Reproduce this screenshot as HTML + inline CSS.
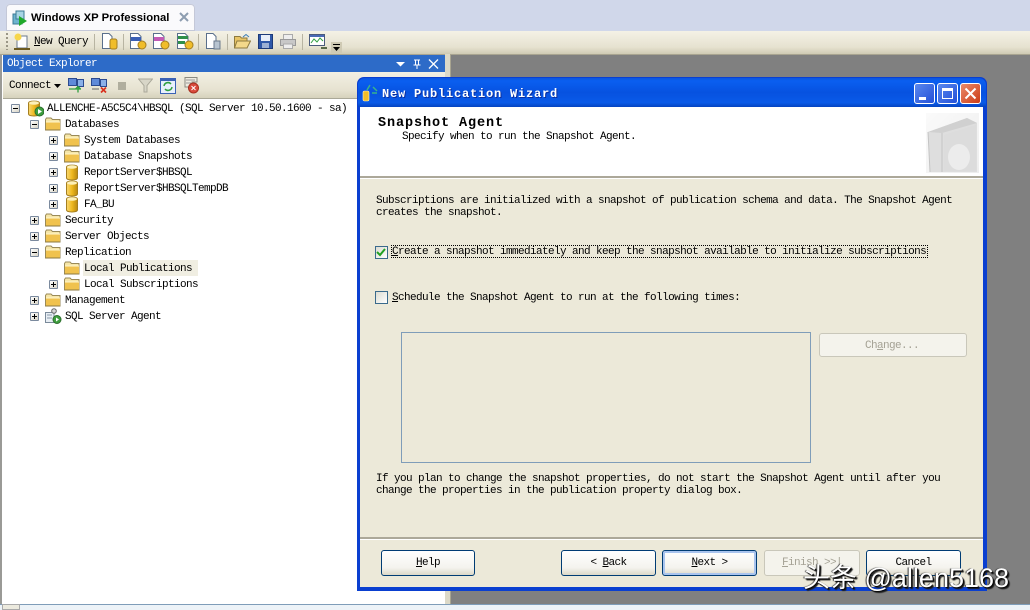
<!DOCTYPE html>
<html><head><meta charset="utf-8">
<style>
html,body{margin:0;padding:0}
body{width:1030px;height:610px;overflow:hidden;position:relative;background:#808080;font-family:"Liberation Mono",monospace;font-size:11px;letter-spacing:-.6px;color:#000}
div,svg,span.a{position:absolute}
.t{white-space:pre;line-height:12px;height:12px;margin-top:1px}
.b{font-weight:bold}
.exp{width:7px;height:7px;border:1px solid #7b8a9e;background:linear-gradient(135deg,#fff,#d8d4c6);box-sizing:content-box;border-radius:1px;margin-top:1px}
.exp:before{content:"";position:absolute;left:1px;top:3px;width:5px;height:1px;background:#000}
.exp.p:after{content:"";position:absolute;left:3px;top:1px;width:1px;height:5px;background:#000}
.btn{height:24px;border:1px solid #003c74;border-radius:3px;background:linear-gradient(#fff,#f4f3ee 70%,#dcd8c8);text-align:center;line-height:25px;box-sizing:content-box}
u{text-decoration:underline}
</style></head><body>
<svg width="0" height="0" style="position:absolute">
<defs>
<symbol id="fo" viewBox="0 0 16 14"><path d="M.5 2.5 L1.5 1 H6 L7.5 2.5 H15 V13 H.5Z" fill="#f6e6a8" stroke="#9a8a58"/><path d="M1 5.5 H15 V13 H1Z" fill="#f0c24e"/><path d="M1 5 H15" stroke="#fff6cc"/><path d="M.5 13 H15.5" stroke="#8d7a40"/></symbol>
<symbol id="db" viewBox="0 0 12 17"><defs><linearGradient id="g" x1="0" x2="1" y1="0" y2="0"><stop offset="0" stop-color="#f9d873"/><stop offset=".5" stop-color="#efb91f"/><stop offset="1" stop-color="#b98810"/></linearGradient></defs><path d="M.5 3 C.5 .5 11.5 .5 11.5 3 V14 C11.5 16.6 .5 16.6 .5 14Z" fill="url(#g)" stroke="#a57f20"/><ellipse cx="6" cy="3" rx="5" ry="1.8" fill="#fdf0b8"/></symbol>
</defs>
</svg>

<!-- top -->
<div style="left:0;top:0;width:1030px;height:31px;background:#d0d7ea"></div>
<div style="left:6px;top:4px;width:189px;height:27px;background:#fafafc;border-radius:4px 4px 0 0;box-shadow:inset 0 0 0 1px #c4c8d8"></div>
<svg style="left:12px;top:10px" width="16" height="16" viewBox="0 0 16 16"><rect x="1" y="4" width="9" height="10" fill="#6db4cf" stroke="#3c7a94"/><rect x="4" y="1" width="8" height="8" fill="#a8d4e4" stroke="#3c7a94"/><path d="M7 6 L15 11 L7 16Z" fill="#1fa82b"/></svg>
<div class="t" style="left:31px;top:11px;font-family:'Liberation Sans',sans-serif;font-size:11.3px;font-weight:bold;letter-spacing:0;line-height:13px;height:13px">Windows XP Professional</div>
<svg style="left:179px;top:12px" width="10" height="10" viewBox="0 0 10 10"><path d="M1 1 L9 9 M9 1 L1 9" stroke="#8d9db0" stroke-width="2"/></svg>

<!-- toolbar -->
<div style="left:0;top:31px;width:1030px;height:23px;background:linear-gradient(#f4f2e6,#e6e2d0 70%,#cfcab4)"></div>
<div style="left:0;top:54px;width:1030px;height:1px;background:#a8a490"></div>
<div style="left:6px;top:33px;width:2px;height:17px;background:repeating-linear-gradient(#9a9686 0 2px,transparent 2px 4px)"></div>
<svg style="left:13px;top:33px" width="19" height="18" viewBox="0 0 19 18"><rect x="4" y="3" width="10" height="12" fill="#fff" stroke="#6b7a8c"/><circle cx="5" cy="4" r="3.5" fill="#f7d64a"/><path d="M1 16 H17" stroke="#6b5a20" stroke-width="2"/></svg>
<div class="t" style="left:34px;top:35px"><u>N</u>ew Query</div>
<div style="left:94px;top:34px;width:1px;height:16px;background:#b8b4a2"></div>
<svg style="left:101px;top:33px" width="18" height="17" viewBox="0 0 18 17"><path d="M1.500 .5 H8 L11 3.500 V15.500 H1.500Z" fill="#fff" stroke="#5a6f8c"/><rect x="9" y="6" width="7" height="10" rx="2" fill="#f0bd2a" stroke="#a57f20"/></svg>
<div style="left:123px;top:34px;width:1px;height:16px;background:#b8b4a2"></div>
<svg style="left:129px;top:33px" width="18" height="17" viewBox="0 0 18 17"><path d="M1.500 .5 H9 L12 3.500 V15.500 H1.500Z" fill="#fff" stroke="#5a6f8c"/><rect x="2" y="4" width="10" height="4" fill="#3a5fb5"/><circle cx="13" cy="12" r="4" fill="#f0bd2a" stroke="#a57f20"/></svg>
<svg style="left:152px;top:33px" width="18" height="17" viewBox="0 0 18 17"><path d="M1.500 .5 H9 L12 3.500 V15.500 H1.500Z" fill="#fff" stroke="#5a6f8c"/><rect x="2" y="4" width="10" height="4" fill="#c35ab5"/><circle cx="13" cy="12" r="4" fill="#f0bd2a" stroke="#a57f20"/></svg>
<svg style="left:176px;top:33px" width="18" height="17" viewBox="0 0 18 17"><path d="M1.500 .5 H9 L12 3.500 V15.500 H1.500Z" fill="#fff" stroke="#5a6f8c"/><rect x="2" y="3" width="10" height="3" fill="#2f8f4a"/><rect x="2" y="8" width="7" height="3" fill="#2f8f4a"/><circle cx="13" cy="12" r="4" fill="#f0bd2a" stroke="#a57f20"/></svg>
<div style="left:198px;top:34px;width:1px;height:16px;background:#b8b4a2"></div>
<svg style="left:205px;top:33px" width="16" height="17" viewBox="0 0 16 17"><path d="M1.500 .5 H8 L11 3.500 V15.500 H1.500Z" fill="#fff" stroke="#5a6f8c"/><rect x="9" y="8" width="6" height="8" fill="#b8c4d0" stroke="#6b7a8c"/></svg>
<div style="left:227px;top:34px;width:1px;height:16px;background:#b8b4a2"></div>
<svg style="left:234px;top:34px" width="17" height="15" viewBox="0 0 17 15"><path d="M.5 2.500 H6 L7.500 4 H13 V14 H.5Z" fill="#e8c465" stroke="#8d7a40"/><path d="M3 7 H16.500 L13 14 H.5Z" fill="#f3d88a" stroke="#8d7a40"/><path d="M9 3 L12 .5 L15 3" stroke="#3f7fb5" fill="none"/></svg>
<svg style="left:258px;top:34px" width="15" height="15" viewBox="0 0 15 15"><rect x=".5" y=".5" width="14" height="14" fill="#2f58a8" stroke="#1d3a78"/><rect x="3" y="1" width="9" height="6" fill="#e8eef8"/><rect x="4" y="9" width="7" height="5" fill="#9cb0d4"/></svg>
<svg style="left:280px;top:34px" width="16" height="15" viewBox="0 0 16 15"><rect x="3.500" y=".5" width="9" height="5" fill="#eee" stroke="#aaa"/><rect x=".5" y="5.500" width="15" height="6" fill="#c8c8c8" stroke="#999"/><rect x="3.500" y="10" width="9" height="4.500" fill="#eee" stroke="#aaa"/></svg>
<div style="left:302px;top:34px;width:1px;height:16px;background:#b8b4a2"></div>
<svg style="left:309px;top:33px" width="19" height="17" viewBox="0 0 19 17"><rect x=".5" y="1.500" width="15" height="11" fill="#fff" stroke="#4a5a7c"/><rect x="1" y="2" width="14" height="2" fill="#4a6ab5"/><path d="M2 10 L5 6 L8 9 L11 5 L14 8" stroke="#2f9f3f" fill="none"/><path d="M12 15 H18" stroke="#5a6a4a" stroke-width="2"/></svg>
<div style="left:331px;top:42px;width:11px;height:11px;background:#cfcab4"></div>
<svg style="left:333px;top:44px" width="7" height="8" viewBox="0 0 7 8"><path d="M0 0 H7 V1 H0Z M0 3 H7 L3.500 7Z" fill="#000"/></svg>

<!-- left pane -->
<div style="left:0;top:55px;width:445px;height:549px;background:#fff"></div>
<div style="left:0;top:55px;width:2px;height:549px;background:#9a9a96"></div>
<div style="left:3px;top:55px;width:442px;height:17px;background:#2d6bc8"></div>
<div class="t" style="left:7px;top:57px;color:#fff">Object Explorer</div>
<svg style="left:396px;top:59px" width="50" height="10" viewBox="0 0 50 10"><path d="M0 3 H9 L4.500 7.500Z" fill="#fff"/><path d="M18 1 H24 M19.500 1 V6 H22.500 V1 M17.500 6 H24.500 M21 6 V10" stroke="#fff" fill="none"/><path d="M33 0.500 L42 9.500 M42 .5 L33 9.500" stroke="#fff" stroke-width="1.300"/></svg>
<div style="left:3px;top:72px;width:442px;height:26px;background:linear-gradient(#f2f0e4,#e6e2d0 70%,#d6d2bc)"></div>
<div class="t" style="left:9px;top:79px">Connect</div>
<svg style="left:54px;top:84px" width="7" height="4"><path d="M0 0 H7 L3.500 4Z" fill="#000"/></svg>
<svg style="left:68px;top:78px" width="17" height="15" viewBox="0 0 17 15"><rect x=".5" y=".5" width="8" height="7" fill="#5f8ad8" stroke="#2b4a90"/><rect x="9.500" y="1.500" width="6" height="7" fill="#8ab0e8" stroke="#2b4a90"/><path d="M1 11 H13 M10 14.500 V9 M7.500 11 L10 8.500 L12.500 11" stroke="#2f9f3f" fill="none" stroke-width="1.300"/></svg>
<svg style="left:91px;top:78px" width="17" height="15" viewBox="0 0 17 15"><rect x=".5" y=".5" width="8" height="7" fill="#5f8ad8" stroke="#2b4a90"/><rect x="9.500" y="1.500" width="6" height="7" fill="#8ab0e8" stroke="#2b4a90"/><path d="M1 11 H8" stroke="#666"/><path d="M10 9.500 L15 14.500 M15 9.500 L10 14.500" stroke="#d8301c" stroke-width="1.700"/></svg>
<div style="left:118px;top:82px;width:8px;height:8px;background:#b0ae9e"></div>
<svg style="left:138px;top:78px" width="15" height="15" viewBox="0 0 15 15"><path d="M.5 1 H14.500 L9 7.500 V14 H6 V7.500Z" fill="#d8d6c8" stroke="#aaa89a"/></svg>
<svg style="left:160px;top:78px" width="16" height="16" viewBox="0 0 16 16"><rect x=".5" y=".5" width="15" height="15" fill="#e8f0fc" stroke="#3a62b5"/><rect x="1" y="1" width="14" height="2" fill="#3a62b5"/><path d="M4 8 A4 4 0 0 1 11 6 M12 9 A4 4 0 0 1 5 11" stroke="#2f9f3f" fill="none" stroke-width="1.500"/></svg>
<svg style="left:183px;top:77px" width="17" height="17" viewBox="0 0 17 17"><path d="M2 .5 H14 V5 H9 V10 H2Z" fill="#efece0" stroke="#8a8a80"/><path d="M3 3 H12 M3 6 H8" stroke="#999"/><circle cx="10.500" cy="11" r="5" fill="#d84a3c" stroke="#a8301f"/><path d="M8.500 9 L12.500 13 M12.500 9 L8.500 13" stroke="#fff"/></svg>
<div style="left:3px;top:98px;width:442px;height:1px;background:#aaa898"></div>

<!-- tree -->
<div class="exp" style="left:11px;top:103px"></div>
<svg style="left:28px;top:100px" width="16" height="17" viewBox="0 0 16 17"><use href="#db" width="12" height="17"/><circle cx="11.500" cy="11.500" r="4.500" fill="#3e9e3e" stroke="#2c6e2c"/><path d="M10 9 L14 11.500 L10 14Z" fill="#fff"/></svg>
<div class="t" style="left:47px;top:102px">ALLENCHE-A5C5C4\HBSQL (SQL Server 10.50.1600 - sa)</div>

<div class="exp" style="left:30px;top:119px"></div>
<svg style="left:45px;top:117px" width="16" height="14"><use href="#fo"/></svg>
<div class="t" style="left:65px;top:118px">Databases</div>

<div class="exp p" style="left:49px;top:135px"></div>
<svg style="left:64px;top:133px" width="16" height="14"><use href="#fo"/></svg>
<div class="t" style="left:84px;top:134px">System Databases</div>

<div class="exp p" style="left:49px;top:151px"></div>
<svg style="left:64px;top:149px" width="16" height="14"><use href="#fo"/></svg>
<div class="t" style="left:84px;top:150px">Database Snapshots</div>

<div class="exp p" style="left:49px;top:167px"></div>
<svg style="left:66px;top:164px" width="12" height="17"><use href="#db"/></svg>
<div class="t" style="left:84px;top:166px">ReportServer$HBSQL</div>

<div class="exp p" style="left:49px;top:183px"></div>
<svg style="left:66px;top:180px" width="12" height="17"><use href="#db"/></svg>
<div class="t" style="left:84px;top:182px">ReportServer$HBSQLTempDB</div>

<div class="exp p" style="left:49px;top:199px"></div>
<svg style="left:66px;top:196px" width="12" height="17"><use href="#db"/></svg>
<div class="t" style="left:84px;top:198px">FA_BU</div>

<div class="exp p" style="left:30px;top:215px"></div>
<svg style="left:45px;top:213px" width="16" height="14"><use href="#fo"/></svg>
<div class="t" style="left:65px;top:214px">Security</div>

<div class="exp p" style="left:30px;top:231px"></div>
<svg style="left:45px;top:229px" width="16" height="14"><use href="#fo"/></svg>
<div class="t" style="left:65px;top:230px">Server Objects</div>

<div class="exp" style="left:30px;top:247px"></div>
<svg style="left:45px;top:245px" width="16" height="14"><use href="#fo"/></svg>
<div class="t" style="left:65px;top:246px">Replication</div>

<svg style="left:64px;top:261px" width="16" height="14"><use href="#fo"/></svg>
<div style="left:83px;top:260px;width:115px;height:16px;background:#f0eee2"></div>
<div class="t" style="left:84px;top:262px">Local Publications</div>

<div class="exp p" style="left:49px;top:279px"></div>
<svg style="left:64px;top:277px" width="16" height="14"><use href="#fo"/></svg>
<div class="t" style="left:84px;top:278px">Local Subscriptions</div>

<div class="exp p" style="left:30px;top:295px"></div>
<svg style="left:45px;top:293px" width="16" height="14"><use href="#fo"/></svg>
<div class="t" style="left:65px;top:294px">Management</div>

<div class="exp p" style="left:30px;top:311px"></div>
<svg style="left:45px;top:308px" width="17" height="16" viewBox="0 0 17 16"><path d="M.5 4.500 H9 V14.500 H.5Z" fill="#e8eef4" stroke="#7a8a9a"/><path d="M2 7 H7 M2 10 H7" stroke="#8a9aaa"/><circle cx="9" cy="3" r="2.300" fill="#d8d8d8" stroke="#666"/><circle cx="12" cy="11.500" r="4" fill="#3e9e3e" stroke="#2c6e2c"/><path d="M11 9.500 L14 11.500 L11 13.500Z" fill="#fff"/></svg>
<div class="t" style="left:65px;top:310px">SQL Server Agent</div>

<!-- splitter -->
<div style="left:445px;top:54px;width:5px;height:550px;background:#dcd9c8;border-right:1px solid #a8a490"></div>

<!-- bottom strip -->
<div style="left:0;top:604px;width:1030px;height:6px;background:#edf3f8;border-top:1px solid #7f9db9;box-sizing:border-box"></div>
<div style="left:2px;top:604px;width:18px;height:6px;background:#eceade;border:1px solid #aaa;box-sizing:border-box"></div>

<!-- dialog -->
<div style="left:357px;top:77px;width:630px;height:514px;background:#0a3fd0;border-radius:7px 7px 0 0"></div>
<div style="left:358px;top:78px;width:628px;height:29px;background:linear-gradient(#0a55e0,#0a5ff0 10%,#0752e0 50%,#0a5ae8 85%,#0544c0);border-radius:7px 7px 0 0"></div>
<svg style="left:362px;top:84px" width="17" height="18" viewBox="0 0 17 18"><path d="M5 6 L8 1 M11 3 L15 7 M10 9 H15" stroke="#37b38c" stroke-width="1.500"/><rect x="1" y="7" width="6" height="10" rx="1.500" fill="#f0bd2a" stroke="#fff5c0" stroke-width=".6"/></svg>
<div class="t b" style="left:382px;top:87px;color:#fff;font-size:12px;letter-spacing:.8px;text-shadow:1px 1px 0 #0a2ea0">New Publication Wizard</div>
<div style="left:914px;top:83px;width:21px;height:21px;border:1px solid #fff;border-radius:3px;background:linear-gradient(135deg,#5a88ee,#2350d8);box-sizing:border-box"></div>
<div style="left:919px;top:97px;width:7px;height:3px;background:#fff"></div>
<div style="left:937px;top:83px;width:21px;height:21px;border:1px solid #fff;border-radius:3px;background:linear-gradient(135deg,#5a88ee,#2350d8);box-sizing:border-box"></div>
<div style="left:942px;top:88px;width:11px;height:11px;border:1px solid #fff;border-top-width:3px;box-sizing:border-box"></div>
<div style="left:960px;top:83px;width:21px;height:21px;border:1px solid #fff;border-radius:3px;background:linear-gradient(135deg,#ea8a6a,#cc3c16);box-sizing:border-box"></div>
<svg style="left:964px;top:87px" width="13" height="13" viewBox="0 0 13 13"><path d="M1.500 1.500 L11.500 11.500 M11.500 1.500 L1.500 11.500" stroke="#fff" stroke-width="2"/></svg>

<div style="left:360px;top:107px;width:623px;height:480px;background:#ece9d9"></div>
<div style="left:360px;top:107px;width:623px;height:69px;background:#fff"></div>
<div style="left:360px;top:176px;width:623px;height:2px;background:#aca899"></div>
<div style="left:360px;top:178px;width:623px;height:1px;background:#fff"></div>
<!-- book -->
<div style="left:926px;top:113px;width:53px;height:60px;background:linear-gradient(135deg,#fafafa,#eeeeee)"></div>
<svg style="left:926px;top:113px" width="53" height="60" viewBox="0 0 53 60"><path d="M2 19 L41 5 L51 10 V59 H4Z" fill="#dedede"/><path d="M2 19 L41 5 L51 10 L16 20 Z" fill="#d0d0d0"/><path d="M16 20 V59 M2 19 L4 59" stroke="#c4c4c4" fill="none"/><path d="M18 22 L50 12 V58 H18Z" fill="#dcdcdc"/><ellipse cx="33" cy="44" rx="11" ry="13" fill="#ececec"/></svg>

<div class="t b" style="left:378px;top:116px;font-size:13.500px;letter-spacing:.9px;line-height:14px;height:14px">Snapshot Agent</div>
<div class="t" style="left:402px;top:130px">Specify when to run the Snapshot Agent.</div>

<div class="t" style="left:376px;top:194px">Subscriptions are initialized with a snapshot of publication schema and data. The Snapshot Agent</div>
<div class="t" style="left:376px;top:206px">creates the snapshot.</div>

<div style="left:375px;top:246px;width:11px;height:11px;border:1px solid #3a6a8c;background:linear-gradient(135deg,#dcdcd2,#fff);box-sizing:content-box"></div>
<svg style="left:376px;top:247px" width="10" height="10" viewBox="0 0 10 10"><path d="M1 5 L4 8 L9 2" stroke="#21a121" stroke-width="2" fill="none"/></svg>
<div style="left:391px;top:245px;width:537px;height:13px;outline:1px dotted #000;outline-offset:-1px"></div>
<div class="t" style="left:392px;top:245px"><u>C</u>reate a snapshot immediately and keep the snapshot available to initialize subscriptions</div>

<div style="left:375px;top:291px;width:11px;height:11px;border:1px solid #3a6a8c;background:linear-gradient(135deg,#dcdcd2,#fff);box-sizing:content-box"></div>
<div class="t" style="left:392px;top:291px"><u>S</u>chedule the Snapshot Agent to run at the following times:</div>

<div style="left:401px;top:332px;width:410px;height:131px;border:1px solid #7f9db9;background:#ece9d9;box-sizing:border-box"></div>
<div style="left:819px;top:333px;width:148px;height:24px;border:1px solid #c9c7ba;border-radius:3px;background:#f4f3ec;box-sizing:border-box;line-height:25px;color:#a5a295;padding-left:45px;white-space:pre">Ch<u>a</u>nge...</div>

<div class="t" style="left:376px;top:472px">If you plan to change the snapshot properties, do not start the Snapshot Agent until after you</div>
<div class="t" style="left:376px;top:484px">change the properties in the publication property dialog box.</div>

<div style="left:360px;top:537px;width:623px;height:2px;background:#aca899"></div>
<div style="left:360px;top:539px;width:623px;height:1px;background:#fff"></div>

<div class="btn" style="left:381px;top:550px;width:92px"><u>H</u>elp</div>
<div class="btn" style="left:561px;top:550px;width:93px">&lt; <u>B</u>ack</div>
<div class="btn" style="left:662px;top:550px;width:93px;box-shadow:inset 0 0 0 2px #a9c4ee"><u>N</u>ext &gt;</div>
<div class="btn" style="left:764px;top:550px;width:94px;border-color:#c9c7ba;background:#f4f3ec;color:#a5a295"><u>F</u>inish &gt;&gt;|</div>
<div class="btn" style="left:866px;top:550px;width:93px">Cancel</div>

<!-- watermark -->
<div class="t" style="left:803px;top:563px;height:28px;line-height:28px;font-family:'Liberation Sans','Noto Sans CJK SC',sans-serif;font-size:27px;letter-spacing:0;color:#fff;text-shadow:1px 1px 1px #000,2px 2px 1px #222,-1px 0 1px #333">头条 @allen5168</div>
</body></html>
